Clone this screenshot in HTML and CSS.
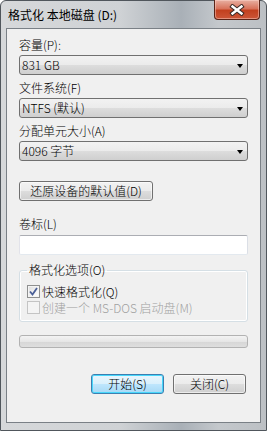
FILE: index.html
```html
<!DOCTYPE html>
<html lang="zh-CN">
<head>
    <meta charset="UTF-8">
    <title>格式化 本地磁盘 (D:)</title>
    <link rel="stylesheet" href="styles.css">
</head>
<body>
    <div class="window">
        <div class="titlebar">
            <span class="title">格式化 本地磁盘 (D:)</span>
            <button class="close-btn" aria-label="关闭">
                <svg width="16" height="12" viewBox="0 0 16 12">
                    <path d="M3.5 2.5 L12.5 9.5 M12.5 2.5 L3.5 9.5" stroke="#3a2a26" stroke-width="4.4" stroke-linecap="square"/>
                    <path d="M3.5 2.5 L12.5 9.5 M12.5 2.5 L3.5 9.5" stroke="#ffffff" stroke-width="2.4" stroke-linecap="square"/>
                </svg>
            </button>
        </div>

        <div class="client">
            <label class="field-label first">容量(P):</label>
            <div class="combo"><span>831 GB</span><i class="arrow"></i></div>

            <label class="field-label">文件系统(F)</label>
            <div class="combo"><span>NTFS (默认)</span><i class="arrow"></i></div>

            <label class="field-label">分配单元大小(A)</label>
            <div class="combo"><span>4096 字节</span><i class="arrow"></i></div>

            <div class="restore-row">
                <button class="btn restore-btn">还原设备的默认值(D)</button>
            </div>

            <label class="field-label volume">卷标(L)</label>
            <input class="text-input" type="text">

            <fieldset class="group">
                <legend>格式化选项(O)</legend>
                <div class="check-row">
                    <span class="checkbox checked">
                        <svg width="9" height="9" viewBox="0 0 9 9">
                            <path d="M1 4.5 L3.5 7.5 L8 1" fill="none" stroke="#4a5f97" stroke-width="1.8"/>
                        </svg>
                    </span>
                    <span>快速格式化(Q)</span>
                </div>
                <div class="check-row disabled">
                    <span class="checkbox"></span>
                    <span>创建一个 MS-DOS 启动盘(M)</span>
                </div>
            </fieldset>

            <div class="progress"></div>

            <div class="actions">
                <button class="btn default">开始(S)</button>
                <button class="btn">关闭(C)</button>
            </div>
        </div>
    </div>
</body>
</html>
```

FILE: styles.css
```css
* {
    box-sizing: border-box;
}

body {
    margin: 0;
    background: #ffffff;
    font-family: "Noto Sans CJK SC", "Liberation Sans", sans-serif;
    font-size: 12px;
    font-weight: 300;
    color: #000;
}

.window {
    width: 267px;
    height: 431px;
    padding: 0 6px 8px 6px;
    display: flex;
    flex-direction: column;
    border: 1px solid #50565c;
    border-radius: 6px 6px 0 0;
    background: linear-gradient(to right, #d6d8da 0%, #cfd2d5 45%, #a9b0b7 68%, #c4c8cc 82%, #bcc0c4 100%);
}

.titlebar {
    height: 28px;
    display: flex;
    justify-content: space-between;
    align-items: flex-start;
}

.title {
    margin-top: 6px;
    padding-left: 1px;
    line-height: 16px;
    font-size: 12px;
    font-weight: 400;
}

.close-btn {
    margin-top: -1px;
    width: 46px;
    height: 20px;
    padding: 0;
    display: flex;
    align-items: center;
    justify-content: center;
    border: 1px solid #5a2418;
    border-top: none;
    border-radius: 0 0 4px 4px;
    background: linear-gradient(#e8b0a2 0%, #d8735c 45%, #c2401f 55%, #cc5638 100%);
    box-shadow: inset 0 0 0 1px rgba(255, 220, 210, 0.45);
}

.client {
    flex: 1;
    padding: 0 12px;
    display: flex;
    flex-direction: column;
    background: #f0f0f0;
    box-shadow: 0 0 0 1px #7a8086;
}

.field-label {
    display: block;
    line-height: 14px;
    margin-top: 6px;
    margin-bottom: 3px;
}

.field-label.first {
    margin-top: 9px;
}

.field-label.volume {
    margin-top: 16px;
    margin-bottom: 4px;
}

.combo {
    height: 20px;
    padding: 0 4px 0 2px;
    display: flex;
    align-items: center;
    justify-content: space-between;
    border: 1px solid #707070;
    border-radius: 3px;
    background: linear-gradient(#f2f2f2 0%, #ebebeb 50%, #dddddd 51%, #cfcfcf 100%);
    line-height: 14px;
}

.arrow {
    width: 0;
    height: 0;
    border-left: 3.5px solid transparent;
    border-right: 3.5px solid transparent;
    border-top: 4px solid #000;
    margin-top: 1px;
}

.restore-row {
    margin-top: 20px;
    display: flex;
}

.btn {
    height: 20px;
    padding: 0 6px;
    font-family: inherit;
    font-size: 12px;
    font-weight: 300;
    line-height: 14px;
    color: #000;
    border: 1px solid #707070;
    border-radius: 3px;
    background: linear-gradient(#f2f2f2 0%, #ebebeb 50%, #dddddd 51%, #cfcfcf 100%);
    box-shadow: inset 0 0 0 1px rgba(255, 255, 255, 0.6);
}

.restore-btn {
    width: 134px;
}

.text-input {
    height: 20px;
    border: 1px solid #abadb3;
    border-bottom-color: #e3e9ef;
    border-left-color: #e2e3ea;
    border-right-color: #dbdfe6;
    border-radius: 2px;
    background: #ffffff;
}

.group {
    margin: 8px 0 0 0;
    padding: 6px 6px 6px 7px;
    border: 1px solid #d5dfe5;
    border-radius: 3px;
    box-shadow: inset 0 0 0 1px #ffffff;
}

.group legend {
    padding: 0 2px;
    line-height: 14px;
}

.check-row {
    height: 16px;
    display: flex;
    align-items: center;
    gap: 2px;
}

.checkbox {
    width: 13px;
    height: 13px;
    display: flex;
    align-items: center;
    justify-content: center;
    border: 1px solid #8e8f8f;
    background: linear-gradient(135deg, #dcdcdc 0%, #f4f4f4 60%, #ffffff 100%);
    box-shadow: inset 0 0 0 1px #f4f4f4;
}

.check-row.disabled {
    color: #a0a0a0;
}

.check-row.disabled .checkbox {
    border-color: #c4c4c4;
    background: #f4f4f4;
}

.progress {
    margin-top: 13px;
    height: 13px;
    border: 1px solid #b2b2b2;
    border-radius: 3px;
    background: linear-gradient(#f3f3f3 0%, #e6e6e6 50%, #d6d6d6 51%, #dedede 100%);
}

.actions {
    margin-top: 26px;
    margin-right: 2px;
    display: flex;
    justify-content: flex-end;
    gap: 9px;
}

.actions .btn {
    width: 73px;
}

.btn.default {
    border-color: #3c7fb1;
    background: linear-gradient(#eaf6fd 0%, #d9f0fc 50%, #bee6fd 51%, #a7d9f5 100%);
    box-shadow: inset 0 0 0 1px #48d7fb;
}
```
